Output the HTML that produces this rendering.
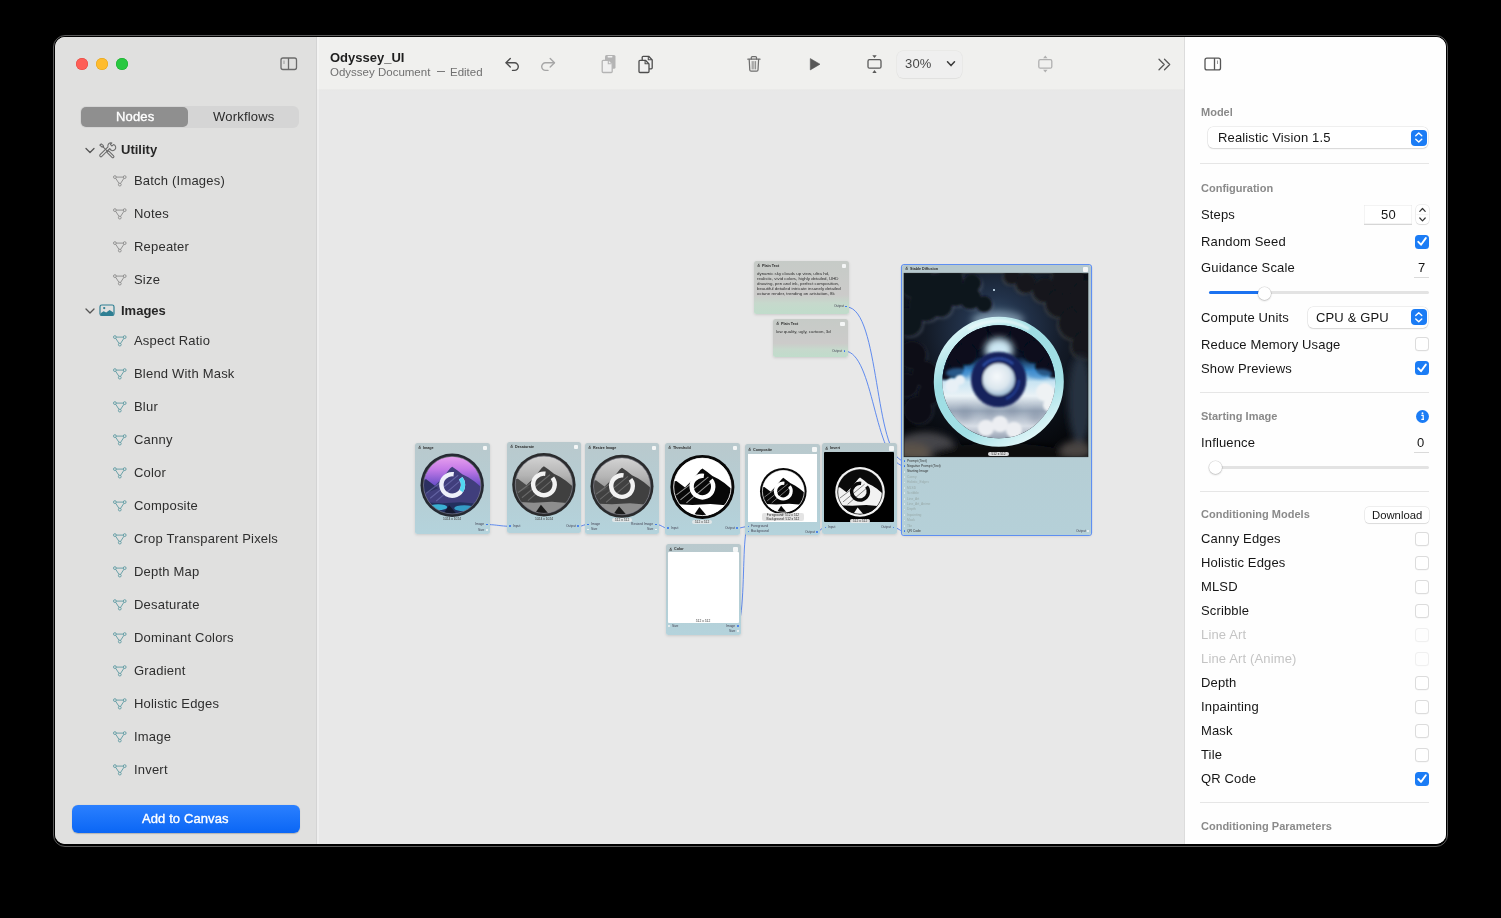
<!DOCTYPE html><html><head><meta charset="utf-8"><style>
html,body{margin:0;padding:0;background:#000;width:1501px;height:918px;overflow:hidden;font-family:'Liberation Sans',sans-serif;}
.t{position:absolute;white-space:nowrap;will-change:transform;}
.a{position:absolute;}
svg{position:absolute;overflow:visible;}
</style></head><body>
<div class="a" style="left:53px;top:35px;width:1393px;height:810px;border:1px solid #5a5a5a;border-radius:12px;background:#000;"></div>
<div class="a" style="left:55px;top:37px;width:1391px;height:807px;border-radius:10px;overflow:hidden;background:#e8e8e8;">
<div class="a" style="left:-55px;top:-37px;width:1501px;height:918px;">
<div class="a" style="left:55px;top:37px;width:262px;height:807px;background:#e0e0df;"></div>
<div class="a" style="left:316px;top:37px;width:1px;height:807px;background:#d4d4d4;"></div>
<div class="a" style="left:317px;top:37px;width:868px;height:53px;background:#f0f0ee;"></div>
<div class="a" style="left:317px;top:89px;width:868px;height:2px;background:linear-gradient(#ececea,#e6e6e6);"></div>
<div class="a" style="left:317px;top:37px;width:2px;height:807px;background:rgba(255,255,255,0.3);"></div>
<div class="a" style="left:1185px;top:37px;width:261px;height:807px;background:#fefefe;"></div>
<div class="a" style="left:1184px;top:37px;width:1px;height:807px;background:#dcdcdc;"></div>
<div class="a" style="left:76px;top:58px;width:12px;height:12px;border-radius:50%;background:#fe5f57;box-shadow:inset 0 0 0 0.5px #e2463f;"></div>
<div class="a" style="left:96px;top:58px;width:12px;height:12px;border-radius:50%;background:#febc2e;box-shadow:inset 0 0 0 0.5px #e1a116;"></div>
<div class="a" style="left:116px;top:58px;width:12px;height:12px;border-radius:50%;background:#28c840;box-shadow:inset 0 0 0 0.5px #17a92c;"></div>
<svg style="left:0;top:0" width="1" height="1"><rect x="281" y="58" width="15.5" height="11.5" rx="2" fill="none" stroke="#6b6b6b" stroke-width="1.3"/><line x1="288.5" y1="58" x2="288.5" y2="69.5" stroke="#6b6b6b" stroke-width="1.3"/><line x1="284" y1="60.5" x2="284" y2="64" stroke="#9a9a9a" stroke-width="1"/></svg>
<div class="a" style="left:80px;top:106px;width:219px;height:22px;background:#d5d5d5;border-radius:6px;"></div>
<div class="a" style="left:81px;top:107px;width:107px;height:20px;background:#8f8f8f;border-radius:5px;"></div>
<div class="t" style="left:115.5px;top:109.00px;font-size:13px;line-height:16px;color:#ffffff;font-weight:normal;letter-spacing:0.2px;-webkit-text-stroke:0.35px #fff;letter-spacing:0.15px;">Nodes</div>
<div class="t" style="left:213px;top:109.00px;font-size:13px;line-height:16px;color:#2a2a2a;font-weight:normal;letter-spacing:0.2px;">Workflows</div>
<svg style="left:0;top:0" width="1" height="1"><path d="M86 148.5 L90 152.5 L94 148.5" fill="none" stroke="#555" stroke-width="1.3" stroke-linecap="round" stroke-linejoin="round"/></svg>
<svg style="left:0;top:0" width="1" height="1"><g fill="none" stroke="#6a6a6a" stroke-width="1.05" stroke-linejoin="round" stroke-linecap="round"><path d="M99.8 145.2 L101.2 143.8 L103.2 145.4 L103.6 147 L102 147 Z"/><path d="M102.8 146.6 L107.6 151.4"/><path d="M106.8 152.2 L108.4 150.6 L113.6 155.8 a1.13 1.13 0 0 1 -1.6 1.6 Z"/><path d="M113.6 144.6 a3.1 3.1 0 1 1 -3.9 3.9 L101.8 156.4 a1.2 1.2 0 0 1 -1.7 -1.7 L108 146.8 a3.1 3.1 0 0 1 3.9 -3.9 L110.4 144.4 L111.8 146 Z"/></g></svg>
<div class="t" style="left:120.8px;top:142.00px;font-size:13px;line-height:16px;color:#262626;font-weight:bold;">Utility</div>
<svg style="left:0;top:0" width="1" height="1"><g fill="none" stroke="#858585" stroke-width="0.85"><circle cx="114.9" cy="177.1" r="1.4"/><circle cx="124.7" cy="177.1" r="1.4"/><circle cx="119.8" cy="184.6" r="1.4"/><line x1="116.30" y1="177.10" x2="123.30" y2="177.10"/><line x1="115.67" y1="178.27" x2="119.03" y2="183.43"/><line x1="123.93" y1="178.27" x2="120.57" y2="183.43"/></g></svg>
<div class="t" style="left:133.8px;top:173.00px;font-size:13px;line-height:16px;color:#2e2e2e;font-weight:normal;letter-spacing:0.2px;">Batch (Images)</div>
<svg style="left:0;top:0" width="1" height="1"><g fill="none" stroke="#858585" stroke-width="0.85"><circle cx="114.9" cy="210.1" r="1.4"/><circle cx="124.7" cy="210.1" r="1.4"/><circle cx="119.8" cy="217.6" r="1.4"/><line x1="116.30" y1="210.10" x2="123.30" y2="210.10"/><line x1="115.67" y1="211.27" x2="119.03" y2="216.43"/><line x1="123.93" y1="211.27" x2="120.57" y2="216.43"/></g></svg>
<div class="t" style="left:133.8px;top:206.00px;font-size:13px;line-height:16px;color:#2e2e2e;font-weight:normal;letter-spacing:0.2px;">Notes</div>
<svg style="left:0;top:0" width="1" height="1"><g fill="none" stroke="#858585" stroke-width="0.85"><circle cx="114.9" cy="243.1" r="1.4"/><circle cx="124.7" cy="243.1" r="1.4"/><circle cx="119.8" cy="250.6" r="1.4"/><line x1="116.30" y1="243.10" x2="123.30" y2="243.10"/><line x1="115.67" y1="244.27" x2="119.03" y2="249.43"/><line x1="123.93" y1="244.27" x2="120.57" y2="249.43"/></g></svg>
<div class="t" style="left:133.8px;top:239.00px;font-size:13px;line-height:16px;color:#2e2e2e;font-weight:normal;letter-spacing:0.2px;">Repeater</div>
<svg style="left:0;top:0" width="1" height="1"><g fill="none" stroke="#858585" stroke-width="0.85"><circle cx="114.9" cy="276.1" r="1.4"/><circle cx="124.7" cy="276.1" r="1.4"/><circle cx="119.8" cy="283.6" r="1.4"/><line x1="116.30" y1="276.10" x2="123.30" y2="276.10"/><line x1="115.67" y1="277.27" x2="119.03" y2="282.43"/><line x1="123.93" y1="277.27" x2="120.57" y2="282.43"/></g></svg>
<div class="t" style="left:133.8px;top:272.00px;font-size:13px;line-height:16px;color:#2e2e2e;font-weight:normal;letter-spacing:0.2px;">Size</div>
<svg style="left:0;top:0" width="1" height="1"><path d="M86 309 L90 313 L94 309" fill="none" stroke="#555" stroke-width="1.3" stroke-linecap="round" stroke-linejoin="round"/></svg>
<svg style="left:0;top:0" width="1" height="1"><rect x="100" y="305" width="14" height="10.5" rx="1.8" fill="none" stroke="#2f7f93" stroke-width="1.2"/><path d="M100.6 315.4 V313.2 L103.6 311.2 L106.2 312.6 L109.6 310 L113.4 312.6 V315.4 Z" fill="#2f7f93"/><circle cx="104.2" cy="308.1" r="1.15" fill="#2f7f93"/></svg>
<div class="t" style="left:120.8px;top:303.00px;font-size:13px;line-height:16px;color:#262626;font-weight:bold;">Images</div>
<svg style="left:0;top:0" width="1" height="1"><g fill="none" stroke="#55969e" stroke-width="0.85"><circle cx="114.9" cy="337.1" r="1.4"/><circle cx="124.7" cy="337.1" r="1.4"/><circle cx="119.8" cy="344.6" r="1.4"/><line x1="116.30" y1="337.10" x2="123.30" y2="337.10"/><line x1="115.67" y1="338.27" x2="119.03" y2="343.43"/><line x1="123.93" y1="338.27" x2="120.57" y2="343.43"/></g></svg>
<div class="t" style="left:133.8px;top:333.00px;font-size:13px;line-height:16px;color:#2e2e2e;font-weight:normal;letter-spacing:0.2px;">Aspect Ratio</div>
<svg style="left:0;top:0" width="1" height="1"><g fill="none" stroke="#55969e" stroke-width="0.85"><circle cx="114.9" cy="370.1" r="1.4"/><circle cx="124.7" cy="370.1" r="1.4"/><circle cx="119.8" cy="377.6" r="1.4"/><line x1="116.30" y1="370.10" x2="123.30" y2="370.10"/><line x1="115.67" y1="371.27" x2="119.03" y2="376.43"/><line x1="123.93" y1="371.27" x2="120.57" y2="376.43"/></g></svg>
<div class="t" style="left:133.8px;top:366.00px;font-size:13px;line-height:16px;color:#2e2e2e;font-weight:normal;letter-spacing:0.2px;">Blend With Mask</div>
<svg style="left:0;top:0" width="1" height="1"><g fill="none" stroke="#55969e" stroke-width="0.85"><circle cx="114.9" cy="403.1" r="1.4"/><circle cx="124.7" cy="403.1" r="1.4"/><circle cx="119.8" cy="410.6" r="1.4"/><line x1="116.30" y1="403.10" x2="123.30" y2="403.10"/><line x1="115.67" y1="404.27" x2="119.03" y2="409.43"/><line x1="123.93" y1="404.27" x2="120.57" y2="409.43"/></g></svg>
<div class="t" style="left:133.8px;top:399.00px;font-size:13px;line-height:16px;color:#2e2e2e;font-weight:normal;letter-spacing:0.2px;">Blur</div>
<svg style="left:0;top:0" width="1" height="1"><g fill="none" stroke="#55969e" stroke-width="0.85"><circle cx="114.9" cy="436.1" r="1.4"/><circle cx="124.7" cy="436.1" r="1.4"/><circle cx="119.8" cy="443.6" r="1.4"/><line x1="116.30" y1="436.10" x2="123.30" y2="436.10"/><line x1="115.67" y1="437.27" x2="119.03" y2="442.43"/><line x1="123.93" y1="437.27" x2="120.57" y2="442.43"/></g></svg>
<div class="t" style="left:133.8px;top:432.00px;font-size:13px;line-height:16px;color:#2e2e2e;font-weight:normal;letter-spacing:0.2px;">Canny</div>
<svg style="left:0;top:0" width="1" height="1"><g fill="none" stroke="#55969e" stroke-width="0.85"><circle cx="114.9" cy="469.1" r="1.4"/><circle cx="124.7" cy="469.1" r="1.4"/><circle cx="119.8" cy="476.6" r="1.4"/><line x1="116.30" y1="469.10" x2="123.30" y2="469.10"/><line x1="115.67" y1="470.27" x2="119.03" y2="475.43"/><line x1="123.93" y1="470.27" x2="120.57" y2="475.43"/></g></svg>
<div class="t" style="left:133.8px;top:465.00px;font-size:13px;line-height:16px;color:#2e2e2e;font-weight:normal;letter-spacing:0.2px;">Color</div>
<svg style="left:0;top:0" width="1" height="1"><g fill="none" stroke="#55969e" stroke-width="0.85"><circle cx="114.9" cy="502.1" r="1.4"/><circle cx="124.7" cy="502.1" r="1.4"/><circle cx="119.8" cy="509.6" r="1.4"/><line x1="116.30" y1="502.10" x2="123.30" y2="502.10"/><line x1="115.67" y1="503.27" x2="119.03" y2="508.43"/><line x1="123.93" y1="503.27" x2="120.57" y2="508.43"/></g></svg>
<div class="t" style="left:133.8px;top:498.00px;font-size:13px;line-height:16px;color:#2e2e2e;font-weight:normal;letter-spacing:0.2px;">Composite</div>
<svg style="left:0;top:0" width="1" height="1"><g fill="none" stroke="#55969e" stroke-width="0.85"><circle cx="114.9" cy="535.1" r="1.4"/><circle cx="124.7" cy="535.1" r="1.4"/><circle cx="119.8" cy="542.6" r="1.4"/><line x1="116.30" y1="535.10" x2="123.30" y2="535.10"/><line x1="115.67" y1="536.27" x2="119.03" y2="541.43"/><line x1="123.93" y1="536.27" x2="120.57" y2="541.43"/></g></svg>
<div class="t" style="left:133.8px;top:531.00px;font-size:13px;line-height:16px;color:#2e2e2e;font-weight:normal;letter-spacing:0.2px;">Crop Transparent Pixels</div>
<svg style="left:0;top:0" width="1" height="1"><g fill="none" stroke="#55969e" stroke-width="0.85"><circle cx="114.9" cy="568.1" r="1.4"/><circle cx="124.7" cy="568.1" r="1.4"/><circle cx="119.8" cy="575.6" r="1.4"/><line x1="116.30" y1="568.10" x2="123.30" y2="568.10"/><line x1="115.67" y1="569.27" x2="119.03" y2="574.43"/><line x1="123.93" y1="569.27" x2="120.57" y2="574.43"/></g></svg>
<div class="t" style="left:133.8px;top:564.00px;font-size:13px;line-height:16px;color:#2e2e2e;font-weight:normal;letter-spacing:0.2px;">Depth Map</div>
<svg style="left:0;top:0" width="1" height="1"><g fill="none" stroke="#55969e" stroke-width="0.85"><circle cx="114.9" cy="601.1" r="1.4"/><circle cx="124.7" cy="601.1" r="1.4"/><circle cx="119.8" cy="608.6" r="1.4"/><line x1="116.30" y1="601.10" x2="123.30" y2="601.10"/><line x1="115.67" y1="602.27" x2="119.03" y2="607.43"/><line x1="123.93" y1="602.27" x2="120.57" y2="607.43"/></g></svg>
<div class="t" style="left:133.8px;top:597.00px;font-size:13px;line-height:16px;color:#2e2e2e;font-weight:normal;letter-spacing:0.2px;">Desaturate</div>
<svg style="left:0;top:0" width="1" height="1"><g fill="none" stroke="#55969e" stroke-width="0.85"><circle cx="114.9" cy="634.1" r="1.4"/><circle cx="124.7" cy="634.1" r="1.4"/><circle cx="119.8" cy="641.6" r="1.4"/><line x1="116.30" y1="634.10" x2="123.30" y2="634.10"/><line x1="115.67" y1="635.27" x2="119.03" y2="640.43"/><line x1="123.93" y1="635.27" x2="120.57" y2="640.43"/></g></svg>
<div class="t" style="left:133.8px;top:630.00px;font-size:13px;line-height:16px;color:#2e2e2e;font-weight:normal;letter-spacing:0.2px;">Dominant Colors</div>
<svg style="left:0;top:0" width="1" height="1"><g fill="none" stroke="#55969e" stroke-width="0.85"><circle cx="114.9" cy="667.1" r="1.4"/><circle cx="124.7" cy="667.1" r="1.4"/><circle cx="119.8" cy="674.6" r="1.4"/><line x1="116.30" y1="667.10" x2="123.30" y2="667.10"/><line x1="115.67" y1="668.27" x2="119.03" y2="673.43"/><line x1="123.93" y1="668.27" x2="120.57" y2="673.43"/></g></svg>
<div class="t" style="left:133.8px;top:663.00px;font-size:13px;line-height:16px;color:#2e2e2e;font-weight:normal;letter-spacing:0.2px;">Gradient</div>
<svg style="left:0;top:0" width="1" height="1"><g fill="none" stroke="#55969e" stroke-width="0.85"><circle cx="114.9" cy="700.1" r="1.4"/><circle cx="124.7" cy="700.1" r="1.4"/><circle cx="119.8" cy="707.6" r="1.4"/><line x1="116.30" y1="700.10" x2="123.30" y2="700.10"/><line x1="115.67" y1="701.27" x2="119.03" y2="706.43"/><line x1="123.93" y1="701.27" x2="120.57" y2="706.43"/></g></svg>
<div class="t" style="left:133.8px;top:696.00px;font-size:13px;line-height:16px;color:#2e2e2e;font-weight:normal;letter-spacing:0.2px;">Holistic Edges</div>
<svg style="left:0;top:0" width="1" height="1"><g fill="none" stroke="#55969e" stroke-width="0.85"><circle cx="114.9" cy="733.1" r="1.4"/><circle cx="124.7" cy="733.1" r="1.4"/><circle cx="119.8" cy="740.6" r="1.4"/><line x1="116.30" y1="733.10" x2="123.30" y2="733.10"/><line x1="115.67" y1="734.27" x2="119.03" y2="739.43"/><line x1="123.93" y1="734.27" x2="120.57" y2="739.43"/></g></svg>
<div class="t" style="left:133.8px;top:729.00px;font-size:13px;line-height:16px;color:#2e2e2e;font-weight:normal;letter-spacing:0.2px;">Image</div>
<svg style="left:0;top:0" width="1" height="1"><g fill="none" stroke="#55969e" stroke-width="0.85"><circle cx="114.9" cy="766.1" r="1.4"/><circle cx="124.7" cy="766.1" r="1.4"/><circle cx="119.8" cy="773.6" r="1.4"/><line x1="116.30" y1="766.10" x2="123.30" y2="766.10"/><line x1="115.67" y1="767.27" x2="119.03" y2="772.43"/><line x1="123.93" y1="767.27" x2="120.57" y2="772.43"/></g></svg>
<div class="t" style="left:133.8px;top:762.00px;font-size:13px;line-height:16px;color:#2e2e2e;font-weight:normal;letter-spacing:0.2px;">Invert</div>
<div class="a" style="left:72px;top:805px;width:228px;height:28px;background:linear-gradient(#2b80ff,#0a66f5);border-radius:6px;box-shadow:0 0.5px 1px rgba(0,0,0,0.2);"></div>
<div class="t" style="left:142px;top:811.00px;font-size:13px;line-height:16px;color:#ffffff;font-weight:normal;letter-spacing:0.2px;-webkit-text-stroke:0.35px #fff;letter-spacing:0.1px;">Add to Canvas</div>
<div class="t" style="left:329.5px;top:49.50px;font-size:13px;line-height:16px;color:#1e1e1e;font-weight:bold;">Odyssey_UI</div>
<div class="t" style="left:329.5px;top:65.00px;font-size:11px;line-height:14px;color:#707070;font-weight:normal;font-size:11.5px;">Odyssey Document</div>
<div class="a" style="left:437px;top:71.2px;width:7.6px;height:1px;background:#7a7a7a;"></div>
<div class="t" style="left:449.5px;top:65.00px;font-size:11px;line-height:14px;color:#707070;font-weight:normal;font-size:11.5px;">Edited</div>
<svg style="left:0;top:0" width="1" height="1"><g fill="none" stroke="#4d4d4d" stroke-width="1.4" stroke-linecap="round" stroke-linejoin="round"><path d="M510.3 58.5 L506 62.8 L510.3 67.1"/><path d="M506.3 62.8 H514.5 A3.8 3.8 0 0 1 514.5 70.4 H512.5"/></g><g fill="none" stroke="#a6a6a6" stroke-width="1.4" stroke-linecap="round" stroke-linejoin="round"><path d="M550.2 58.5 L554.5 62.8 L550.2 67.1"/><path d="M554.2 62.8 H545.5 A3.8 3.8 0 0 0 545.5 70.4 H548"/></g></svg>
<svg style="left:0;top:0" width="1" height="1"><path d="M605 56.5 a1.5 1.5 0 0 1 1.5 -1.5 h7.5 a1.5 1.5 0 0 1 1.5 1.5 v10.8 a1.5 1.5 0 0 1 -1.5 1.5 h-9 z" fill="#b4b4b4"/><rect x="607.5" y="56" width="5" height="1.5" rx="0.7" fill="#f0f0f0"/><path d="M603.2 60.3 h6 l3 3 v8.2 a1 1 0 0 1 -1 1 h-8 a1 1 0 0 1 -1 -1 v-10.2 a1 1 0 0 1 1 -1 z" fill="#f0f0f0" stroke="#b4b4b4" stroke-width="1.3"/><path d="M608.3 60.5 v3.2 h3.2" fill="none" stroke="#b4b4b4" stroke-width="1.1"/></svg>
<svg style="left:0;top:0" width="1" height="1"><g fill="#f0f0f0" stroke="#4d4d4d" stroke-width="1.3" stroke-linejoin="round"><path d="M643.2 56.3 h5.5 l3.5 3.7 v7.8 a1 1 0 0 1 -1 1 h-8 a1 1 0 0 1 -1 -1 v-10.5 a1 1 0 0 1 1 -1 z"/><path d="M648.3 56.5 v3.3 h3.5" fill="none" stroke-width="1.1"/><path d="M640 60.3 h5.5 l3.5 3.7 v7.5 a1 1 0 0 1 -1 1 h-8 a1 1 0 0 1 -1 -1 v-10.2 a1 1 0 0 1 1 -1 z"/><path d="M645.1 60.5 v3.3 h3.5" fill="none" stroke-width="1.1"/></g></svg>
<svg style="left:0;top:0" width="1" height="1"><g fill="none" stroke="#6e6e6e" stroke-width="1.25" stroke-linecap="round" stroke-linejoin="round"><path d="M747.8 59.2 H760"/><path d="M751.3 59 V57.5 a1 1 0 0 1 1 -1 h3.2 a1 1 0 0 1 1 1 V59"/><path d="M749.2 59.5 L749.8 70 a1.3 1.3 0 0 0 1.3 1.2 h5.6 a1.3 1.3 0 0 0 1.3 -1.2 L758.6 59.5"/><path d="M752.2 61.5 V69 M753.9 61.5 V69 M755.6 61.5 V69" stroke-width="0.8"/></g></svg>
<svg style="left:0;top:0" width="1" height="1"><path d="M810.3 58.6 L820 64.2 L810.3 69.9 Z" fill="#585858" stroke="#585858" stroke-width="0.6" stroke-linejoin="round"/></svg>
<svg style="left:0;top:0" width="1" height="1"><rect x="868.0" y="59.7" width="13" height="8.5" rx="1.5" fill="none" stroke="#5a5a5a" stroke-width="1.3"/><path d="M872.3 55.2 H876.7 L874.5 58 Z M872.3 73 H876.7 L874.5 70.1 Z" fill="#5a5a5a"/></svg>
<svg style="left:0;top:0" width="1" height="1"><rect x="1038.8" y="59.7" width="13" height="8.5" rx="1.5" fill="none" stroke="#b0b0b0" stroke-width="1.3"/><path d="M1043.1 58.2 H1047.5 L1045.3 55.4 Z M1043.1 69.7 H1047.5 L1045.3 72.6 Z" fill="#b0b0b0"/></svg>
<div class="a" style="left:897px;top:50.5px;width:65px;height:27px;border-radius:6px;background:#efefef;box-shadow:0 0 0 0.5px rgba(0,0,0,0.06), 0 1px 1px rgba(0,0,0,0.04);"></div>
<div class="t" style="left:904.5px;top:56.00px;font-size:13px;line-height:16px;color:#484848;font-weight:normal;letter-spacing:0.2px;">30%</div>
<svg style="left:0;top:0" width="1" height="1"><path d="M947.5 61.8 L951 65.6 L954.5 61.8" fill="none" stroke="#3a3a3a" stroke-width="1.5" stroke-linecap="round" stroke-linejoin="round"/></svg>
<svg style="left:0;top:0" width="1" height="1"><path d="M1159 59.2 L1164.2 64.5 L1159 69.8 M1164.5 59.2 L1169.7 64.5 L1164.5 69.8" fill="none" stroke="#555" stroke-width="1.25" stroke-linecap="round" stroke-linejoin="round"/></svg>
<svg style="left:0;top:0" width="1" height="1"><rect x="1205" y="58.2" width="15.5" height="11.7" rx="2" fill="none" stroke="#555" stroke-width="1.3"/><line x1="1214.5" y1="58.2" x2="1214.5" y2="69.9" stroke="#555" stroke-width="1.3"/><line x1="1217.5" y1="60.5" x2="1217.5" y2="64" stroke="#999" stroke-width="1"/></svg>
<div class="t" style="left:1200.8px;top:105.00px;font-size:11px;line-height:14px;color:#8a8a8a;font-weight:bold;">Model</div>
<div class="a" style="left:1208px;top:127px;width:219.5px;height:21px;border-radius:5px;background:#fff;box-shadow:0 0 0 0.5px rgba(0,0,0,0.12), 0 1px 1.5px rgba(0,0,0,0.10);"></div>
<div class="t" style="left:1217.5px;top:129.50px;font-size:13px;line-height:16px;color:#161616;font-weight:normal;letter-spacing:0.15px;">Realistic Vision 1.5</div>
<div class="a" style="left:1411.0px;top:129.5px;width:15.5px;height:16px;border-radius:4px;background:#1b7cf5;"></div>
<svg style="left:0;top:0" width="1" height="1"><path d="M1415.75 135.8 L1418.75 133.0 L1421.75 135.8 M1415.75 139.2 L1418.75 142.0 L1421.75 139.2" fill="none" stroke="#fff" stroke-width="1.4" stroke-linecap="round" stroke-linejoin="round"/></svg>
<div class="a" style="left:1200px;top:163px;width:229px;height:1px;background:#e6e6e6;"></div>
<div class="t" style="left:1200.8px;top:181.00px;font-size:11px;line-height:14px;color:#8a8a8a;font-weight:bold;">Configuration</div>
<div class="t" style="left:1200.8px;top:207.20px;font-size:13px;line-height:16px;color:#161616;font-weight:normal;letter-spacing:0.15px;">Steps</div>
<div class="a" style="left:1363.5px;top:204.7px;width:48.5px;height:20px;background:#fff;box-shadow:inset 0 0 0 0.5px #e8e8e8;border-bottom:1px solid #d6d6d6;box-sizing:border-box;"></div>
<div class="t" style="left:1380.6px;top:206.50px;font-size:13px;line-height:16px;color:#161616;font-weight:normal;letter-spacing:0.15px;">50</div>
<div class="a" style="left:1416px;top:204.7px;width:13px;height:19.5px;border-radius:4px;background:#fff;box-shadow:0 0 0 0.5px rgba(0,0,0,0.12), 0 1px 1px rgba(0,0,0,0.08);"></div>
<svg style="left:0;top:0" width="1" height="1"><path d="M1419.8 211.3 L1422.5 208.5 L1425.2 211.3 M1419.8 218 L1422.5 220.8 L1425.2 218" fill="none" stroke="#333" stroke-width="1.2" stroke-linecap="round" stroke-linejoin="round"/><line x1="1416.5" y1="214.6" x2="1428.5" y2="214.6" stroke="#eee" stroke-width="0.6"/></svg>
<div class="t" style="left:1200.8px;top:233.70px;font-size:13px;line-height:16px;color:#161616;font-weight:normal;letter-spacing:0.15px;">Random Seed</div>
<div class="a" style="left:1415px;top:234.5px;width:14px;height:14px;border-radius:3.5px;background:#1b7cf5;"></div>
<svg style="left:0;top:0" width="1" height="1"><path d="M1418.3 241.8 L1421 244.7 L1425.8 238.1" fill="none" stroke="#fff" stroke-width="1.9" stroke-linecap="round" stroke-linejoin="round"/></svg>
<div class="t" style="left:1200.8px;top:260.30px;font-size:13px;line-height:16px;color:#161616;font-weight:normal;letter-spacing:0.15px;">Guidance Scale</div>
<div class="t" style="left:1417.8px;top:259.70px;font-size:13px;line-height:16px;color:#161616;font-weight:normal;letter-spacing:0.15px;">7</div>
<div class="a" style="left:1413.5px;top:277px;width:15px;height:1px;background:#dadada;"></div>
<div class="a" style="left:1209px;top:291.3px;width:220px;height:3px;background:#e3e3e3;border-radius:2px;"></div>
<div class="a" style="left:1209px;top:291.3px;width:55px;height:3px;background:#1b72f0;border-radius:2px;"></div>
<div class="a" style="left:1257.5px;top:286.5px;width:13px;height:13px;border-radius:50%;background:#fff;box-shadow:0 0 0 0.5px rgba(0,0,0,0.14), 0 1px 2px rgba(0,0,0,0.18);"></div>
<div class="t" style="left:1200.8px;top:309.70px;font-size:13px;line-height:16px;color:#161616;font-weight:normal;letter-spacing:0.15px;">Compute Units</div>
<div class="a" style="left:1307.5px;top:307px;width:120px;height:20.5px;border-radius:5px;background:#fff;box-shadow:0 0 0 0.5px rgba(0,0,0,0.12), 0 1px 1.5px rgba(0,0,0,0.10);"></div>
<div class="t" style="left:1315.8px;top:309.50px;font-size:13px;line-height:16px;color:#161616;font-weight:normal;letter-spacing:0.15px;">CPU &amp; GPU</div>
<div class="a" style="left:1411.0px;top:309.25px;width:15.5px;height:16px;border-radius:4px;background:#1b7cf5;"></div>
<svg style="left:0;top:0" width="1" height="1"><path d="M1415.75 315.55 L1418.75 312.75 L1421.75 315.55 M1415.75 318.95 L1418.75 321.75 L1421.75 318.95" fill="none" stroke="#fff" stroke-width="1.4" stroke-linecap="round" stroke-linejoin="round"/></svg>
<div class="t" style="left:1200.8px;top:336.70px;font-size:13px;line-height:16px;color:#161616;font-weight:normal;letter-spacing:0.15px;">Reduce Memory Usage</div>
<div class="a" style="left:1415px;top:337px;width:14px;height:14px;border-radius:3.5px;background:#fff;box-shadow:inset 0 0 0 1px #dcdcdc, 0 0.5px 0.5px rgba(0,0,0,0.05);opacity:1"></div>
<div class="t" style="left:1200.8px;top:360.50px;font-size:13px;line-height:16px;color:#161616;font-weight:normal;letter-spacing:0.15px;">Show Previews</div>
<div class="a" style="left:1415px;top:361px;width:14px;height:14px;border-radius:3.5px;background:#1b7cf5;"></div>
<svg style="left:0;top:0" width="1" height="1"><path d="M1418.3 368.3 L1421 371.2 L1425.8 364.6" fill="none" stroke="#fff" stroke-width="1.9" stroke-linecap="round" stroke-linejoin="round"/></svg>
<div class="a" style="left:1200px;top:391.5px;width:229px;height:1px;background:#e6e6e6;"></div>
<div class="t" style="left:1200.8px;top:409.30px;font-size:11px;line-height:14px;color:#8a8a8a;font-weight:bold;">Starting Image</div>
<div class="a" style="left:1416px;top:409.7px;width:13px;height:13px;border-radius:50%;background:#1b7cf5;"></div>
<svg style="left:0;top:0" width="1" height="1"><circle cx="1422.5" cy="413.3" r="0.95" fill="#fff"/><path d="M1421.3 415.3 H1423.2 V419.3 M1421.3 419.4 H1424" fill="none" stroke="#fff" stroke-width="1.2"/></svg>
<div class="t" style="left:1200.8px;top:435.00px;font-size:13px;line-height:16px;color:#161616;font-weight:normal;letter-spacing:0.15px;">Influence</div>
<div class="t" style="left:1416.7px;top:435.00px;font-size:13px;line-height:16px;color:#161616;font-weight:normal;letter-spacing:0.15px;">0</div>
<div class="a" style="left:1413.5px;top:452px;width:15px;height:1px;background:#dadada;"></div>
<div class="a" style="left:1209px;top:466px;width:220px;height:3px;background:#e3e3e3;border-radius:2px;"></div>
<div class="a" style="left:1208.5px;top:461px;width:13px;height:13px;border-radius:50%;background:#fff;box-shadow:0 0 0 0.5px rgba(0,0,0,0.14), 0 1px 2px rgba(0,0,0,0.18);"></div>
<div class="a" style="left:1200px;top:490.5px;width:229px;height:1px;background:#e6e6e6;"></div>
<div class="t" style="left:1200.8px;top:507.30px;font-size:11px;line-height:14px;color:#8a8a8a;font-weight:bold;">Conditioning Models</div>
<div class="a" style="left:1365px;top:506.5px;width:64px;height:16px;border-radius:4px;background:#fff;box-shadow:0 0 0 0.5px rgba(0,0,0,0.13), 0 1px 1px rgba(0,0,0,0.08);"></div>
<div class="t" style="left:1371.5px;top:507.50px;font-size:11px;line-height:14px;color:#161616;font-weight:normal;font-size:11.3px;">Download</div>
<div class="t" style="left:1200.8px;top:531.00px;font-size:13px;line-height:16px;color:#161616;font-weight:normal;letter-spacing:0.15px;">Canny Edges</div>
<div class="a" style="left:1415px;top:531.7px;width:14px;height:14px;border-radius:3.5px;background:#fff;box-shadow:inset 0 0 0 1px #dcdcdc, 0 0.5px 0.5px rgba(0,0,0,0.05);opacity:1"></div>
<div class="t" style="left:1200.8px;top:555.00px;font-size:13px;line-height:16px;color:#161616;font-weight:normal;letter-spacing:0.15px;">Holistic Edges</div>
<div class="a" style="left:1415px;top:555.7px;width:14px;height:14px;border-radius:3.5px;background:#fff;box-shadow:inset 0 0 0 1px #dcdcdc, 0 0.5px 0.5px rgba(0,0,0,0.05);opacity:1"></div>
<div class="t" style="left:1200.8px;top:579.00px;font-size:13px;line-height:16px;color:#161616;font-weight:normal;letter-spacing:0.15px;">MLSD</div>
<div class="a" style="left:1415px;top:579.7px;width:14px;height:14px;border-radius:3.5px;background:#fff;box-shadow:inset 0 0 0 1px #dcdcdc, 0 0.5px 0.5px rgba(0,0,0,0.05);opacity:1"></div>
<div class="t" style="left:1200.8px;top:603.00px;font-size:13px;line-height:16px;color:#161616;font-weight:normal;letter-spacing:0.15px;">Scribble</div>
<div class="a" style="left:1415px;top:603.7px;width:14px;height:14px;border-radius:3.5px;background:#fff;box-shadow:inset 0 0 0 1px #dcdcdc, 0 0.5px 0.5px rgba(0,0,0,0.05);opacity:1"></div>
<div class="t" style="left:1200.8px;top:627.00px;font-size:13px;line-height:16px;color:#c4c4c4;font-weight:normal;letter-spacing:0.15px;">Line Art</div>
<div class="a" style="left:1415px;top:627.7px;width:14px;height:14px;border-radius:3.5px;background:#fff;box-shadow:inset 0 0 0 1px #dcdcdc, 0 0.5px 0.5px rgba(0,0,0,0.05);opacity:0.4"></div>
<div class="t" style="left:1200.8px;top:651.00px;font-size:13px;line-height:16px;color:#c4c4c4;font-weight:normal;letter-spacing:0.15px;">Line Art (Anime)</div>
<div class="a" style="left:1415px;top:651.7px;width:14px;height:14px;border-radius:3.5px;background:#fff;box-shadow:inset 0 0 0 1px #dcdcdc, 0 0.5px 0.5px rgba(0,0,0,0.05);opacity:0.4"></div>
<div class="t" style="left:1200.8px;top:675.00px;font-size:13px;line-height:16px;color:#161616;font-weight:normal;letter-spacing:0.15px;">Depth</div>
<div class="a" style="left:1415px;top:675.7px;width:14px;height:14px;border-radius:3.5px;background:#fff;box-shadow:inset 0 0 0 1px #dcdcdc, 0 0.5px 0.5px rgba(0,0,0,0.05);opacity:1"></div>
<div class="t" style="left:1200.8px;top:699.00px;font-size:13px;line-height:16px;color:#161616;font-weight:normal;letter-spacing:0.15px;">Inpainting</div>
<div class="a" style="left:1415px;top:699.7px;width:14px;height:14px;border-radius:3.5px;background:#fff;box-shadow:inset 0 0 0 1px #dcdcdc, 0 0.5px 0.5px rgba(0,0,0,0.05);opacity:1"></div>
<div class="t" style="left:1200.8px;top:723.00px;font-size:13px;line-height:16px;color:#161616;font-weight:normal;letter-spacing:0.15px;">Mask</div>
<div class="a" style="left:1415px;top:723.7px;width:14px;height:14px;border-radius:3.5px;background:#fff;box-shadow:inset 0 0 0 1px #dcdcdc, 0 0.5px 0.5px rgba(0,0,0,0.05);opacity:1"></div>
<div class="t" style="left:1200.8px;top:747.00px;font-size:13px;line-height:16px;color:#161616;font-weight:normal;letter-spacing:0.15px;">Tile</div>
<div class="a" style="left:1415px;top:747.7px;width:14px;height:14px;border-radius:3.5px;background:#fff;box-shadow:inset 0 0 0 1px #dcdcdc, 0 0.5px 0.5px rgba(0,0,0,0.05);opacity:1"></div>
<div class="t" style="left:1200.8px;top:771.00px;font-size:13px;line-height:16px;color:#161616;font-weight:normal;letter-spacing:0.15px;">QR Code</div>
<div class="a" style="left:1415px;top:771.7px;width:14px;height:14px;border-radius:3.5px;background:#1b7cf5;"></div>
<svg style="left:0;top:0" width="1" height="1"><path d="M1418.3 779.0 L1421 781.9000000000001 L1425.8 775.3000000000001" fill="none" stroke="#fff" stroke-width="1.9" stroke-linecap="round" stroke-linejoin="round"/></svg>
<div class="a" style="left:1200px;top:802px;width:229px;height:1px;background:#e6e6e6;"></div>
<div class="t" style="left:1200.8px;top:819.40px;font-size:11px;line-height:14px;color:#8a8a8a;font-weight:bold;">Conditioning Parameters</div>
<svg style="left:0;top:0" width="1" height="1"><g fill="none" stroke="#5080ee" stroke-width="0.9"><path d="M847 307 C880 309, 874 455, 903.5 461"/><path d="M845 351 C874 353, 874 460, 903.5 466"/><path d="M488 524.5 C498 525, 500 526, 509 526.3"/><path d="M579 526.3 C583 526, 584 524.5, 587 524.5"/><path d="M657 524.5 C662 525, 663 528, 667 528"/><path d="M738 528 C742 528, 744 526.5, 748 526.5"/><path d="M738 625 C744 615, 743 560, 745 540 S747 532, 748 531.5"/><path d="M817 532 C821 531, 821 527.5, 825 527.5"/><path d="M894 527.5 C899 528, 899 531, 903.5 531"/></g></svg>
<div class="a" style="left:415px;top:443px;width:75px;height:91px;background:linear-gradient(180deg,#b9c9cd 0%,#b5ced5 60%,#b4d3dc 100%);border-radius:2.5px;box-shadow:0 1px 3px rgba(0,0,0,0.13);"></div>
<div class="t" style="left:418px;top:445.2px;font-size:4.2px;line-height:5px;color:#3a3a3a;font-weight:bold;">≚</div>
<div class="t" style="left:422.6px;top:446.12px;font-size:3.7px;line-height:5px;color:#2a2a2a;font-weight:bold;">Image</div>
<div class="a" style="left:482.5px;top:445.8px;width:4.6px;height:4.6px;background:#f4f6f6;border-radius:1px;"></div>
<svg style="left:0;top:0" width="1" height="1"><defs><linearGradient id="g452" x1="0" y1="0" x2="0" y2="1"><stop offset="0" stop-color="#f0a8f0"/><stop offset="0.25" stop-color="#c47ae8"/><stop offset="0.5" stop-color="#6a4fc8"/><stop offset="1" stop-color="#2a3070"/></linearGradient><clipPath id="cg452"><circle cx="452.2" cy="485.2" r="28.5"/></clipPath></defs><circle cx="452.2" cy="485.2" r="31.7" fill="#262a33"/><g clip-path="url(#cg452)"><rect x="420.5" y="453.5" width="63.4" height="63.4" fill="url(#g452)"/><path d="M420.50 494.20 L432.20 488.20 L440.20 480.20 L446.20 473.20 L450.20 468.20 L452.20 466.70 L457.20 470.20 L462.20 474.20 L468.20 477.20 L474.20 481.20 L480.20 486.20 L483.90 488.20 L483.90 504.20 L420.50 504.20 Z" fill="#403e7c"/><path d="M420.50 480.20 L426.20 479.20 L438.20 488.20 L420.50 495.20 Z" fill="#2c3060"/><path d="M430.20 498.20 L458.20 475.20 M436.20 501.20 L462.20 479.20 M426.20 493.20 L450.20 475.20" stroke="#a0a4e8" stroke-width="1.1" opacity="0.35"/><path d="M420.50 502.20 L442.20 503.20 L460.20 502.20 L483.90 504.20 L483.90 516.90 L420.50 516.90 Z" fill="#23305e"/><ellipse cx="438.2" cy="507.2" rx="9" ry="3" fill="#40c8e8" opacity="0.85"/><ellipse cx="464.2" cy="508.2" rx="10" ry="3" fill="#38b8e0" opacity="0.8"/><path d="M441.20 516.90 L449.20 505.20 L459.20 516.90 Z" fill="#161a30"/></g><circle cx="452.2" cy="485.2" r="28.7" fill="none" stroke="#9a9aa8" stroke-width="0.7" opacity="0.7"/><path d="M460.71 478.25 A10.8 10.8 0 1 1 453.70 474.21" fill="none" stroke="#eef0fa" stroke-width="4.4"/><path d="M460.71 478.25 A10.8 10.8 0 0 1 461.05 491.09" fill="none" stroke="#52d6f2" stroke-width="4.4"/></svg>
<div class="t" style="left:442.2px;top:516.5px;width:20px;text-align:center;font-size:3.3px;line-height:4px;color:#333;background:transparent;border-radius:2px;">1024 x 1024</div>
<div class="a" style="left:486.1px;top:523.6px;width:1.8px;height:1.8px;border-radius:50%;background:#2f6ef0;"></div>
<div class="t" style="right:1016.6px;top:522.30px;font-size:3.3px;line-height:4.4px;color:#445;">Image</div>
<div class="a" style="left:486.1px;top:529.1px;width:1.8px;height:1.8px;border-radius:50%;background:#f5f5f5;"></div>
<div class="t" style="right:1016.6px;top:527.80px;font-size:3.3px;line-height:4.4px;color:#445;">Size</div>
<div class="a" style="left:507px;top:442px;width:74px;height:91px;background:linear-gradient(180deg,#b9c9cd 0%,#b5ced5 60%,#b4d3dc 100%);border-radius:2.5px;box-shadow:0 1px 3px rgba(0,0,0,0.13);"></div>
<div class="t" style="left:510px;top:444.2px;font-size:4.2px;line-height:5px;color:#3a3a3a;font-weight:bold;">≚</div>
<div class="t" style="left:514.6px;top:445.12px;font-size:3.7px;line-height:5px;color:#2a2a2a;font-weight:bold;">Desaturate</div>
<div class="a" style="left:573.5px;top:444.8px;width:4.6px;height:4.6px;background:#f4f6f6;border-radius:1px;"></div>
<svg style="left:0;top:0" width="1" height="1"><defs><linearGradient id="g543" x1="0" y1="0" x2="0" y2="1"><stop offset="0" stop-color="#d8d8d8"/><stop offset="0.35" stop-color="#b4b4b4"/><stop offset="0.6" stop-color="#8a8a8a"/><stop offset="1" stop-color="#707070"/></linearGradient><clipPath id="cg543"><circle cx="543.9" cy="484.7" r="28.5"/></clipPath></defs><circle cx="543.9" cy="484.7" r="31.7" fill="#2a2b2d"/><g clip-path="url(#cg543)"><rect x="512.1999999999999" y="453.0" width="63.4" height="63.4" fill="url(#g543)"/><path d="M512.20 493.70 L523.90 487.70 L531.90 479.70 L537.90 472.70 L541.90 467.70 L543.90 466.20 L548.90 469.70 L553.90 473.70 L559.90 476.70 L565.90 480.70 L571.90 485.70 L575.60 487.70 L575.60 503.70 L512.20 503.70 Z" fill="#404040"/><path d="M512.20 479.70 L517.90 478.70 L529.90 487.70 L512.20 494.70 Z" fill="#4a4a4a"/><path d="M521.90 497.70 L549.90 474.70 M527.90 500.70 L553.90 478.70 M517.90 492.70 L541.90 474.70" stroke="#b0b0b0" stroke-width="1.1" opacity="0.35"/><path d="M512.20 501.70 L533.90 502.70 L551.90 501.70 L575.60 503.70 L575.60 516.40 L512.20 516.40 Z" fill="#8e8e8e"/><path d="M532.90 516.40 L540.90 504.70 L550.90 516.40 Z" fill="#1c1c1c"/></g><circle cx="543.9" cy="484.7" r="28.7" fill="none" stroke="#9a9aa8" stroke-width="0.7" opacity="0.7"/><path d="M552.41 477.75 A10.8 10.8 0 1 1 545.40 473.71" fill="none" stroke="#f2f2f2" stroke-width="4.4"/></svg>
<div class="t" style="left:533.9px;top:516.5px;width:20px;text-align:center;font-size:3.3px;line-height:4px;color:#333;background:transparent;border-radius:2px;">1024 x 1024</div>
<div class="a" style="left:509.1px;top:525.4px;width:1.8px;height:1.8px;border-radius:50%;background:#2f6ef0;"></div>
<div class="t" style="left:512.6px;top:524.10px;font-size:3.3px;line-height:4.4px;color:#445;">Input</div>
<div class="a" style="left:577.1px;top:525.4px;width:1.8px;height:1.8px;border-radius:50%;background:#2f6ef0;"></div>
<div class="t" style="right:925.6px;top:524.10px;font-size:3.3px;line-height:4.4px;color:#445;">Output</div>
<div class="a" style="left:585px;top:443px;width:74px;height:90.60000000000002px;background:linear-gradient(180deg,#b9c9cd 0%,#b5ced5 60%,#b4d3dc 100%);border-radius:2.5px;box-shadow:0 1px 3px rgba(0,0,0,0.13);"></div>
<div class="t" style="left:588px;top:445.2px;font-size:4.2px;line-height:5px;color:#3a3a3a;font-weight:bold;">≚</div>
<div class="t" style="left:592.6px;top:446.12px;font-size:3.7px;line-height:5px;color:#2a2a2a;font-weight:bold;">Resize Image</div>
<div class="a" style="left:651.5px;top:445.8px;width:4.6px;height:4.6px;background:#f4f6f6;border-radius:1px;"></div>
<svg style="left:0;top:0" width="1" height="1"><defs><linearGradient id="g622" x1="0" y1="0" x2="0" y2="1"><stop offset="0" stop-color="#d8d8d8"/><stop offset="0.35" stop-color="#b4b4b4"/><stop offset="0.6" stop-color="#8a8a8a"/><stop offset="1" stop-color="#707070"/></linearGradient><clipPath id="cg622"><circle cx="622" cy="486.3" r="28.3"/></clipPath></defs><circle cx="622" cy="486.3" r="31.5" fill="#2a2b2d"/><g clip-path="url(#cg622)"><rect x="590.5" y="454.8" width="63.0" height="63.0" fill="url(#g622)"/><path d="M590.50 495.30 L602.00 489.30 L610.00 481.30 L616.00 474.30 L620.00 469.30 L622.00 467.80 L627.00 471.30 L632.00 475.30 L638.00 478.30 L644.00 482.30 L650.00 487.30 L653.50 489.30 L653.50 505.30 L590.50 505.30 Z" fill="#404040"/><path d="M590.50 481.30 L596.00 480.30 L608.00 489.30 L590.50 496.30 Z" fill="#4a4a4a"/><path d="M600.00 499.30 L628.00 476.30 M606.00 502.30 L632.00 480.30 M596.00 494.30 L620.00 476.30" stroke="#b0b0b0" stroke-width="1.1" opacity="0.35"/><path d="M590.50 503.30 L612.00 504.30 L630.00 503.30 L653.50 505.30 L653.50 517.80 L590.50 517.80 Z" fill="#8e8e8e"/><path d="M611.00 517.80 L619.00 506.30 L629.00 517.80 Z" fill="#1c1c1c"/></g><circle cx="622" cy="486.3" r="28.5" fill="none" stroke="#9a9aa8" stroke-width="0.7" opacity="0.7"/><path d="M630.51 479.35 A10.8 10.8 0 1 1 623.50 475.31" fill="none" stroke="#f2f2f2" stroke-width="4.4"/></svg>
<div class="t" style="left:612px;top:518px;width:20px;text-align:center;font-size:3.3px;line-height:4px;color:#333;background:rgba(235,235,235,0.8);border-radius:2px;">512 x 512</div>
<div class="a" style="left:587.1px;top:523.6px;width:1.8px;height:1.8px;border-radius:50%;background:#2f6ef0;"></div>
<div class="t" style="left:590.6px;top:522.30px;font-size:3.3px;line-height:4.4px;color:#445;">Image</div>
<div class="a" style="left:587.1px;top:528.6px;width:1.8px;height:1.8px;border-radius:50%;background:#f5f5f5;"></div>
<div class="t" style="left:590.6px;top:527.30px;font-size:3.3px;line-height:4.4px;color:#445;">Size</div>
<div class="a" style="left:655.1px;top:523.6px;width:1.8px;height:1.8px;border-radius:50%;background:#2f6ef0;"></div>
<div class="t" style="right:847.6px;top:522.30px;font-size:3.3px;line-height:4.4px;color:#445;">Resized Image</div>
<div class="a" style="left:655.1px;top:528.6px;width:1.8px;height:1.8px;border-radius:50%;background:#f5f5f5;"></div>
<div class="t" style="right:847.6px;top:527.30px;font-size:3.3px;line-height:4.4px;color:#445;">Size</div>
<div class="a" style="left:665px;top:443px;width:75px;height:92px;background:linear-gradient(180deg,#b9c9cd 0%,#b5ced5 60%,#b4d3dc 100%);border-radius:2.5px;box-shadow:0 1px 3px rgba(0,0,0,0.13);"></div>
<div class="t" style="left:668px;top:445.2px;font-size:4.2px;line-height:5px;color:#3a3a3a;font-weight:bold;">≚</div>
<div class="t" style="left:672.6px;top:446.12px;font-size:3.7px;line-height:5px;color:#2a2a2a;font-weight:bold;">Threshold</div>
<div class="a" style="left:732.5px;top:445.8px;width:4.6px;height:4.6px;background:#f4f6f6;border-radius:1px;"></div>
<svg style="left:0;top:0" width="1" height="1"><defs><linearGradient id="g702" x1="0" y1="0" x2="0" y2="1"><stop offset="0" stop-color="#ffffff"/><stop offset="1" stop-color="#ffffff"/></linearGradient><clipPath id="cg702"><circle cx="702.4" cy="486.9" r="28.8"/></clipPath></defs><circle cx="702.4" cy="486.9" r="32" fill="#080808"/><g clip-path="url(#cg702)"><rect x="670.4" y="454.9" width="64" height="64" fill="url(#g702)"/><path d="M670.40 495.90 L682.40 489.90 L690.40 481.90 L696.40 474.90 L700.40 469.90 L702.40 468.40 L707.40 471.90 L712.40 475.90 L718.40 478.90 L724.40 482.90 L730.40 487.90 L734.40 489.90 L734.40 505.90 L670.40 505.90 Z" fill="#080808"/><path d="M670.40 481.90 L676.40 480.90 L688.40 489.90 L670.40 496.90 Z" fill="#080808"/><path d="M680.40 499.90 L708.40 476.90 M686.40 502.90 L712.40 480.90 M676.40 494.90 L700.40 476.90" stroke="#ffffff" stroke-width="1.1" opacity="0.55"/><path d="M670.40 503.90 L692.40 504.90 L710.40 503.90 L734.40 505.90 L734.40 518.90 L670.40 518.90 Z" fill="#ffffff"/><path d="M691.40 518.90 L699.40 506.90 L709.40 518.90 Z" fill="#080808"/></g><circle cx="702.4" cy="486.9" r="28.7" fill="none" stroke="#fff" stroke-width="0.8"/><path d="M710.91 479.95 A10.8 10.8 0 1 1 703.90 475.91" fill="none" stroke="#ffffff" stroke-width="4.4"/></svg>
<div class="t" style="left:692.4px;top:519.5px;width:20px;text-align:center;font-size:3.3px;line-height:4px;color:#333;background:rgba(235,235,235,0.8);border-radius:2px;">512 x 512</div>
<div class="a" style="left:667.1px;top:527.1px;width:1.8px;height:1.8px;border-radius:50%;background:#2f6ef0;"></div>
<div class="t" style="left:670.6px;top:525.80px;font-size:3.3px;line-height:4.4px;color:#445;">Input</div>
<div class="a" style="left:736.1px;top:527.1px;width:1.8px;height:1.8px;border-radius:50%;background:#2f6ef0;"></div>
<div class="t" style="right:766.6px;top:525.80px;font-size:3.3px;line-height:4.4px;color:#445;">Output</div>
<div class="a" style="left:666.4px;top:544.3px;width:74.20000000000005px;height:91.10000000000002px;background:linear-gradient(180deg,#b9c9cd 0%,#b5ced5 60%,#b4d3dc 100%);border-radius:2.5px;box-shadow:0 1px 3px rgba(0,0,0,0.13);"></div>
<div class="t" style="left:669.4px;top:546.5px;font-size:4.2px;line-height:5px;color:#3a3a3a;font-weight:bold;">≚</div>
<div class="t" style="left:674.0px;top:547.42px;font-size:3.7px;line-height:5px;color:#2a2a2a;font-weight:bold;">Color</div>
<div class="a" style="left:733.1px;top:547.0999999999999px;width:4.6px;height:4.6px;background:#f4f6f6;border-radius:1px;"></div>
<div class="a" style="left:668px;top:552.4px;width:70.6px;height:70.6px;background:#fff;border-radius:1px;"></div>
<div class="t" style="left:693.3px;top:618.5px;width:20px;text-align:center;font-size:3.3px;line-height:4px;color:#333;background:transparent;border-radius:2px;">512 x 512</div>
<div class="a" style="left:668.1px;top:625.1px;width:1.8px;height:1.8px;border-radius:50%;background:#f5f5f5;"></div>
<div class="t" style="left:671.6px;top:623.80px;font-size:3.3px;line-height:4.4px;color:#445;">Size</div>
<div class="a" style="left:737.1px;top:625.1px;width:1.8px;height:1.8px;border-radius:50%;background:#2f6ef0;"></div>
<div class="t" style="right:765.6px;top:623.80px;font-size:3.3px;line-height:4.4px;color:#445;">Image</div>
<div class="a" style="left:737.1px;top:630.1px;width:1.8px;height:1.8px;border-radius:50%;background:#f5f5f5;"></div>
<div class="t" style="right:765.6px;top:628.80px;font-size:3.3px;line-height:4.4px;color:#445;">Size</div>
<div class="a" style="left:745.3px;top:444.4px;width:74.5px;height:90.80000000000007px;background:linear-gradient(180deg,#b9c9cd 0%,#b5ced5 60%,#b4d3dc 100%);border-radius:2.5px;box-shadow:0 1px 3px rgba(0,0,0,0.13);"></div>
<div class="t" style="left:748.3px;top:446.59999999999997px;font-size:4.2px;line-height:5px;color:#3a3a3a;font-weight:bold;">≚</div>
<div class="t" style="left:752.9px;top:447.52px;font-size:3.7px;line-height:5px;color:#2a2a2a;font-weight:bold;">Composite</div>
<div class="a" style="left:812.3px;top:447.2px;width:4.6px;height:4.6px;background:#f4f6f6;border-radius:1px;"></div>
<div class="a" style="left:748px;top:454.1px;width:68.7px;height:67.8px;background:#fff;"></div>
<svg style="left:0;top:0" width="1" height="1"><defs><linearGradient id="g783" x1="0" y1="0" x2="0" y2="1"><stop offset="0" stop-color="#ffffff"/><stop offset="1" stop-color="#ffffff"/></linearGradient><clipPath id="cg783"><circle cx="783.3" cy="491.3" r="20.97"/></clipPath></defs><circle cx="783.3" cy="491.3" r="23.3" fill="#080808"/><g clip-path="url(#cg783)"><rect x="760.0" y="468.0" width="46.6" height="46.6" fill="url(#g783)"/><path d="M760.00 497.85 L768.74 493.48 L774.56 487.66 L778.93 482.56 L781.84 478.92 L783.30 477.83 L786.94 480.38 L790.58 483.29 L794.95 485.48 L799.32 488.39 L803.69 492.03 L806.60 493.48 L806.60 505.13 L760.00 505.13 Z" fill="#080808"/><path d="M760.00 487.66 L764.37 486.93 L773.11 493.48 L760.00 498.58 Z" fill="#080808"/><path d="M767.28 500.77 L787.67 484.02 M771.65 502.95 L790.58 486.93 M764.37 497.12 L781.84 484.02" stroke="#ffffff" stroke-width="0.8009375000000001" opacity="0.55"/><path d="M760.00 503.68 L776.02 504.41 L789.12 503.68 L806.60 505.13 L806.60 514.60 L760.00 514.60 Z" fill="#ffffff"/><path d="M775.29 514.60 L781.12 505.86 L788.40 514.60 Z" fill="#080808"/></g><circle cx="783.3" cy="491.3" r="20.8971875" fill="none" stroke="#fff" stroke-width="0.5825"/><path d="M789.50 486.24 A7.8637500000000005 7.8637500000000005 0 1 1 784.39 483.29" fill="none" stroke="#ffffff" stroke-width="3.2037500000000003"/></svg>
<div class="t" style="left:762px;top:513px;width:42px;text-align:center;font-size:3.2px;line-height:4.2px;color:#222;background:rgba(225,225,225,0.9);border-radius:2px;">Foreground: 512 x 512<br>Background: 512 x 512</div>
<div class="a" style="left:747.6px;top:525.6px;width:1.8px;height:1.8px;border-radius:50%;background:#2f6ef0;"></div>
<div class="t" style="left:751.1px;top:524.30px;font-size:3.3px;line-height:4.4px;color:#445;">Foreground</div>
<div class="a" style="left:747.6px;top:530.6px;width:1.8px;height:1.8px;border-radius:50%;background:#2f6ef0;"></div>
<div class="t" style="left:751.1px;top:529.30px;font-size:3.3px;line-height:4.4px;color:#445;">Background</div>
<div class="a" style="left:816.1px;top:531.1px;width:1.8px;height:1.8px;border-radius:50%;background:#2f6ef0;"></div>
<div class="t" style="right:686.6px;top:529.80px;font-size:3.3px;line-height:4.4px;color:#445;">Output</div>
<div class="a" style="left:822.4px;top:443.3px;width:74.30000000000007px;height:90.49999999999994px;background:linear-gradient(180deg,#b9c9cd 0%,#b5ced5 60%,#b4d3dc 100%);border-radius:2.5px;box-shadow:0 1px 3px rgba(0,0,0,0.13);"></div>
<div class="t" style="left:825.4px;top:445.5px;font-size:4.2px;line-height:5px;color:#3a3a3a;font-weight:bold;">≚</div>
<div class="t" style="left:830.0px;top:446.42px;font-size:3.7px;line-height:5px;color:#2a2a2a;font-weight:bold;">Invert</div>
<div class="a" style="left:889.2px;top:446.1px;width:4.6px;height:4.6px;background:#f4f6f6;border-radius:1px;"></div>
<div class="a" style="left:824.2px;top:451.9px;width:70px;height:69.7px;background:#000;border-radius:1px;"></div>
<svg style="left:0;top:0" width="1" height="1"><defs><linearGradient id="g860" x1="0" y1="0" x2="0" y2="1"><stop offset="0" stop-color="#0a0a0a"/><stop offset="1" stop-color="#0a0a0a"/></linearGradient><clipPath id="cg860"><circle cx="860" cy="491.9" r="22.32"/></clipPath></defs><circle cx="860" cy="491.9" r="24.8" fill="#f2f2f2"/><g clip-path="url(#cg860)"><rect x="835.2" y="467.09999999999997" width="49.6" height="49.6" fill="url(#g860)"/><path d="M835.20 498.88 L844.50 494.22 L850.70 488.02 L855.35 482.60 L858.45 478.72 L860.00 477.56 L863.88 480.27 L867.75 483.38 L872.40 485.70 L877.05 488.80 L881.70 492.67 L884.80 494.22 L884.80 506.62 L835.20 506.62 Z" fill="#f2f2f2"/><path d="M835.20 488.02 L839.85 487.25 L849.15 494.22 L835.20 499.65 Z" fill="#f2f2f2"/><path d="M842.95 501.97 L864.65 484.15 M847.60 504.30 L867.75 487.25 M839.85 498.10 L858.45 484.15" stroke="#0a0a0a" stroke-width="0.8525000000000001" opacity="0.55"/><path d="M835.20 505.07 L852.25 505.85 L866.20 505.07 L884.80 506.62 L884.80 516.70 L835.20 516.70 Z" fill="#0a0a0a"/><path d="M851.48 516.70 L857.67 507.40 L865.42 516.70 Z" fill="#f2f2f2"/></g><circle cx="860" cy="491.9" r="22.2425" fill="none" stroke="#0a0a0a" stroke-width="0.6200000000000001"/><path d="M866.60 486.51 A8.370000000000001 8.370000000000001 0 1 1 861.16 483.38" fill="none" stroke="#0a0a0a" stroke-width="3.4100000000000006"/></svg>
<div class="t" style="left:849.5px;top:518.8px;width:20px;text-align:center;font-size:3.3px;line-height:4px;color:#333;background:rgba(235,235,235,0.95);border-radius:2px;">512 x 512</div>
<div class="a" style="left:824.6px;top:526.6px;width:1.8px;height:1.8px;border-radius:50%;background:#2f6ef0;"></div>
<div class="t" style="left:828.1px;top:525.30px;font-size:3.3px;line-height:4.4px;color:#445;">Input</div>
<div class="a" style="left:892.6px;top:526.6px;width:1.8px;height:1.8px;border-radius:50%;background:#2f6ef0;"></div>
<div class="t" style="right:610.1px;top:525.30px;font-size:3.3px;line-height:4.4px;color:#445;">Output</div>
<div class="a" style="left:754px;top:261px;width:95px;height:52.80000000000001px;background:linear-gradient(180deg,#c6cbc7 0%,#cccbca 64%,#c6d9cc 80%,#c0dccb 100%);border-radius:2.5px;box-shadow:0 1px 3px rgba(0,0,0,0.13);"></div>
<div class="t" style="left:757px;top:263.2px;font-size:4.2px;line-height:5px;color:#3a3a3a;font-weight:bold;">≚</div>
<div class="t" style="left:761.6px;top:264.12px;font-size:3.7px;line-height:5px;color:#2a2a2a;font-weight:bold;">Plain Text</div>
<div class="a" style="left:841.5px;top:263.8px;width:4.6px;height:4.6px;background:#f4f6f6;border-radius:1px;"></div>
<div class="t" style="left:757px;top:271.2px;font-size:4.4px;line-height:5px;color:#2e2e2e;">dynamic sky clouds up view, ultra hd,<br>realistic, vivid colors, highly detailed, UHD<br>drawing, pen and ink, perfect composition,<br>beautiful detailed intricate insanely detailed<br>octane render, trending on artstation, 8k</div>
<div class="a" style="left:845.1px;top:305.6px;width:1.8px;height:1.8px;border-radius:50%;background:#2f6ef0;"></div>
<div class="t" style="right:657.6px;top:304.30px;font-size:3.3px;line-height:4.4px;color:#445;">Output</div>
<div class="a" style="left:773.2px;top:319.1px;width:74.69999999999993px;height:38.39999999999998px;background:linear-gradient(180deg,#c6cbc7 0%,#cccbca 64%,#c6d9cc 80%,#c0dccb 100%);border-radius:2.5px;box-shadow:0 1px 3px rgba(0,0,0,0.13);"></div>
<div class="t" style="left:776.2px;top:321.3px;font-size:4.2px;line-height:5px;color:#3a3a3a;font-weight:bold;">≚</div>
<div class="t" style="left:780.8000000000001px;top:322.22px;font-size:3.7px;line-height:5px;color:#2a2a2a;font-weight:bold;">Plain Text</div>
<div class="a" style="left:840.4px;top:321.90000000000003px;width:4.6px;height:4.6px;background:#f4f6f6;border-radius:1px;"></div>
<div class="t" style="left:776.3px;top:329.3px;font-size:4.4px;line-height:5px;color:#2e2e2e;">low quality, ugly, cartoon, 3d</div>
<div class="a" style="left:843.6px;top:350.1px;width:1.8px;height:1.8px;border-radius:50%;background:#2f6ef0;"></div>
<div class="t" style="right:659.1px;top:348.80px;font-size:3.3px;line-height:4.4px;color:#445;">Output</div>
<div class="a" style="left:902px;top:264.5px;width:188.7px;height:270.5px;background:linear-gradient(180deg,#b6c8cd 0%,#b5d0d8 100%);border-radius:2.5px;box-shadow:0 0 0 1.1px #5f8ff2, 0 1px 3px rgba(0,0,0,0.15);"></div>
<div class="t" style="left:905px;top:266.3px;font-size:4.2px;line-height:5px;color:#3a3a3a;font-weight:bold;">≚</div>
<div class="t" style="left:909.6px;top:267.22px;font-size:3.7px;line-height:5px;color:#2a2a2a;font-weight:bold;">Stable Diffusion</div>
<div class="a" style="left:1083px;top:267px;width:4.6px;height:4.6px;background:#f4f6f6;border-radius:1px;"></div>
<svg style="left:0;top:0" width="1" height="1"><defs>
<radialGradient id="sdsky" cx="0.5" cy="0.3" r="0.7"><stop offset="0" stop-color="#3c5872"/><stop offset="0.25" stop-color="#22324a"/><stop offset="0.55" stop-color="#131a26"/><stop offset="1" stop-color="#06080c"/></radialGradient>
<linearGradient id="sdin" x1="0" y1="0" x2="0" y2="1"><stop offset="0" stop-color="#050914"/><stop offset="0.28" stop-color="#0a1226"/><stop offset="0.4" stop-color="#3a88c8"/><stop offset="0.5" stop-color="#c8e4f2"/><stop offset="0.62" stop-color="#eaf2f6"/><stop offset="0.75" stop-color="#98a6b8"/><stop offset="0.88" stop-color="#d8dee6"/><stop offset="1" stop-color="#8e9aac"/></linearGradient>
<radialGradient id="sdcore" cx="0.45" cy="0.4" r="0.6"><stop offset="0" stop-color="#f6f9fb"/><stop offset="0.6" stop-color="#dbe6ee"/><stop offset="1" stop-color="#8fb0cc"/></radialGradient>
<linearGradient id="sdring" x1="0.2" y1="0" x2="0.8" y2="1"><stop offset="0" stop-color="#e0f8fa"/><stop offset="0.3" stop-color="#9edde3"/><stop offset="0.7" stop-color="#a2e0e6"/><stop offset="1" stop-color="#e8f8fa"/></linearGradient>
<clipPath id="sdclip"><rect x="904" y="273.2" width="184" height="183.6"/></clipPath>
<clipPath id="sdinclip"><circle cx="998.8" cy="381.8" r="56.5"/></clipPath>
<filter id="bA" x="-50%" y="-50%" width="200%" height="200%"><feGaussianBlur stdDeviation="0.8"/></filter>
<filter id="bB" x="-50%" y="-50%" width="200%" height="200%"><feGaussianBlur stdDeviation="1.6"/></filter>
<filter id="bC" x="-50%" y="-50%" width="200%" height="200%"><feGaussianBlur stdDeviation="3.5"/></filter>
<filter id="bD" x="-50%" y="-50%" width="200%" height="200%"><feGaussianBlur stdDeviation="6"/></filter>
</defs>
<g clip-path="url(#sdclip)">
<rect x="904" y="273.2" width="184" height="183.6" fill="url(#sdsky)"/>
<ellipse cx="998" cy="320" rx="26" ry="9" fill="#c0dcec" opacity="0.5" filter="url(#bC)"/>
<g filter="url(#bB)"><circle cx="917.2" cy="282.2" r="18" fill="#5c6678" opacity="0.4"/><circle cx="937.2" cy="292.2" r="16" fill="#5c6678" opacity="0.4"/><circle cx="957.2" cy="295.2" r="13" fill="#5c6678" opacity="0.4"/><circle cx="972.2" cy="300.2" r="11" fill="#5c6678" opacity="0.4"/><circle cx="986.2" cy="306.2" r="8" fill="#5c6678" opacity="0.4"/><circle cx="952.2" cy="281.2" r="13" fill="#5c6678" opacity="0.4"/><circle cx="974.2" cy="285.2" r="9" fill="#5c6678" opacity="0.4"/><circle cx="927.2" cy="307.2" r="16" fill="#5c6678" opacity="0.4"/><circle cx="910.2" cy="324.2" r="14" fill="#5c6678" opacity="0.4"/><circle cx="942.2" cy="307.2" r="12" fill="#5c6678" opacity="0.4"/><circle cx="1009.8" cy="278.2" r="8" fill="#5a524c" opacity="0.4"/><circle cx="1023.8" cy="285.2" r="10" fill="#5a524c" opacity="0.4"/><circle cx="1042.8" cy="292.2" r="12" fill="#5a524c" opacity="0.4"/><circle cx="1057.8" cy="305.2" r="14" fill="#5a524c" opacity="0.4"/><circle cx="1072.8" cy="325.2" r="16" fill="#5a524c" opacity="0.4"/><circle cx="1083.8" cy="347.2" r="14" fill="#5a524c" opacity="0.4"/><circle cx="1065.8" cy="281.2" r="16" fill="#5a524c" opacity="0.4"/><circle cx="1085.8" cy="300.2" r="18" fill="#5a524c" opacity="0.4"/><circle cx="914" cy="356" r="14" fill="#3a404e" opacity="0.4"/><circle cx="927" cy="375" r="13" fill="#3a404e" opacity="0.4"/><circle cx="931" cy="395" r="11" fill="#3a404e" opacity="0.4"/><circle cx="920" cy="411" r="14" fill="#3a404e" opacity="0.4"/><circle cx="908" cy="386" r="12" fill="#3a404e" opacity="0.4"/></g>
<g filter="url(#bA)"><circle cx="915" cy="280" r="18" fill="#10131d" /><circle cx="935" cy="290" r="16" fill="#10131d" /><circle cx="955" cy="293" r="13" fill="#10131d" /><circle cx="970" cy="298" r="11" fill="#10131d" /><circle cx="984" cy="304" r="8" fill="#10131d" /><circle cx="950" cy="279" r="13" fill="#10131d" /><circle cx="972" cy="283" r="9" fill="#10131d" /><circle cx="925" cy="305" r="16" fill="#10131d" /><circle cx="908" cy="322" r="14" fill="#10131d" /><circle cx="940" cy="305" r="12" fill="#10131d" /><circle cx="1012" cy="276" r="8" fill="#12151b" /><circle cx="1026" cy="283" r="10" fill="#12151b" /><circle cx="1045" cy="290" r="12" fill="#12151b" /><circle cx="1060" cy="303" r="14" fill="#12151b" /><circle cx="1075" cy="323" r="16" fill="#12151b" /><circle cx="1086" cy="345" r="14" fill="#12151b" /><circle cx="1068" cy="279" r="16" fill="#12151b" /><circle cx="1088" cy="298" r="18" fill="#12151b" /><circle cx="912" cy="355" r="14" fill="#0c0f17" /><circle cx="925" cy="374" r="13" fill="#0c0f17" /><circle cx="929" cy="394" r="11" fill="#0c0f17" /><circle cx="918" cy="410" r="14" fill="#0c0f17" /><circle cx="906" cy="385" r="12" fill="#0c0f17" /></g>
<g filter="url(#bC)">
<ellipse cx="925" cy="447" rx="30" ry="15" fill="#44444a"/>
<ellipse cx="912" cy="452" rx="18" ry="9" fill="#5c524a"/>
<ellipse cx="1000" cy="456" rx="70" ry="13" fill="#07080c"/>
<ellipse cx="1080" cy="400" rx="12" ry="45" fill="#283040"/>
<ellipse cx="1076" cy="450" rx="16" ry="9" fill="#4a4442"/>
</g>
<circle cx="994" cy="290" r="1.1" fill="#cfe6f5"/>
</g>
<circle cx="998.8" cy="381.8" r="60.7" fill="none" stroke="url(#sdring)" stroke-width="8.6"/>
<path d="M968.45 329.2 A60.7 60.7 0 0 1 1029.2 329.2" fill="none" stroke="#f4fcfd" stroke-width="3" opacity="0.7" filter="url(#bA)"/>
<g clip-path="url(#sdinclip)">
<rect x="940" y="324" width="120" height="116" fill="url(#sdin)"/>
<g filter="url(#bA)"><circle cx="950" cy="345" r="18" fill="#070d1c" /><circle cx="972" cy="336" r="16" fill="#070d1c" /><circle cx="1000" cy="326" r="12" fill="#070d1c" /><circle cx="1026" cy="336" r="16" fill="#070d1c" /><circle cx="1050" cy="348" r="18" fill="#070d1c" /><circle cx="954" cy="368" r="10" fill="#070d1c" /><circle cx="1045" cy="366" r="10" fill="#070d1c" /><circle cx="966" cy="354" r="11" fill="#070d1c" /><circle cx="1034" cy="352" r="11" fill="#070d1c" /><circle cx="945" cy="372" r="8" fill="#070d1c" /><circle cx="1054" cy="370" r="8" fill="#070d1c" /></g>
<ellipse cx="999" cy="350" rx="14" ry="12" fill="#d8f4ff" opacity="0.95" filter="url(#bC)"/>
<ellipse cx="958" cy="373" rx="12" ry="5" fill="#3a8ad0" opacity="0.6" filter="url(#bB)"/>
<ellipse cx="1040" cy="374" rx="12" ry="5" fill="#3a8ad0" opacity="0.6" filter="url(#bB)"/>
<g filter="url(#bA)">
<circle cx="952" cy="386" r="7" fill="#e8f0f6" /><circle cx="960" cy="380" r="5" fill="#e8f0f6" />
<circle cx="1045" cy="392" r="9" fill="#eef2f4" /><circle cx="1050" cy="405" r="7" fill="#eef2f4" />
</g>
<g filter="url(#bC)"><circle cx="965" cy="414" r="7" fill="#7c8aa0" opacity="0.45"/><circle cx="990" cy="412" r="5" fill="#7c8aa0" opacity="0.45"/><circle cx="1012" cy="410" r="6" fill="#7c8aa0" opacity="0.45"/><circle cx="1036" cy="416" r="7" fill="#7c8aa0" opacity="0.45"/></g>
<g filter="url(#bA)"><circle cx="986" cy="428" r="8" fill="#eceef2" /><circle cx="1000" cy="424" r="8" fill="#eceef2" /><circle cx="1014" cy="430" r="8" fill="#eceef2" /></g>
</g>
<g filter="url(#bA)">
<circle cx="998.7" cy="380" r="17.5" fill="url(#sdcore)"/>
<circle cx="998.7" cy="379.6" r="22" fill="none" stroke="#14225c" stroke-width="11.5"/>
<path d="M983 366 A21 21 0 0 1 1013 364" fill="none" stroke="#3152b0" stroke-width="2.4" opacity="0.85"/>
<path d="M1019 380 A21 21 0 0 1 1006 399" fill="none" stroke="#2a48a8" stroke-width="2" opacity="0.7"/>
</g>
<rect x="904" y="273.2" width="184" height="183.6" fill="none" stroke="#111" stroke-width="0.6"/>
</svg>
<div class="t" style="left:988px;top:451.5px;width:21px;text-align:center;font-size:3.2px;line-height:4.3px;color:#222;background:rgba(230,230,230,0.95);border-radius:2px;">512 x 512</div>
<div class="a" style="left:903.6px;top:459.90000000000003px;width:1.8px;height:1.8px;border-radius:50%;background:#2f6ef0;"></div>
<div class="t" style="left:907.1px;top:458.60px;font-size:3.3px;line-height:4.4px;color:#333;">Prompt (Text)</div>
<div class="a" style="left:903.6px;top:465.32000000000005px;width:1.8px;height:1.8px;border-radius:50%;background:#2f6ef0;"></div>
<div class="t" style="left:907.1px;top:464.02px;font-size:3.3px;line-height:4.4px;color:#333;">Negative Prompt (Text)</div>
<div class="a" style="left:903.6px;top:470.74px;width:1.8px;height:1.8px;border-radius:50%;background:#dfe8ec;"></div>
<div class="t" style="left:907.1px;top:469.44px;font-size:3.3px;line-height:4.4px;color:#333;">Starting Image</div>
<div class="a" style="left:903.6px;top:476.16px;width:1.8px;height:1.8px;border-radius:50%;background:#dfe8ec;"></div>
<div class="t" style="left:907.1px;top:474.86px;font-size:3.3px;line-height:4.4px;color:#9aa;">Canny</div>
<div class="a" style="left:903.6px;top:481.58000000000004px;width:1.8px;height:1.8px;border-radius:50%;background:#dfe8ec;"></div>
<div class="t" style="left:907.1px;top:480.28px;font-size:3.3px;line-height:4.4px;color:#9aa;">Holistic_Edges</div>
<div class="a" style="left:903.6px;top:487.00000000000006px;width:1.8px;height:1.8px;border-radius:50%;background:#dfe8ec;"></div>
<div class="t" style="left:907.1px;top:485.70px;font-size:3.3px;line-height:4.4px;color:#9aa;">MLSD</div>
<div class="a" style="left:903.6px;top:492.42px;width:1.8px;height:1.8px;border-radius:50%;background:#dfe8ec;"></div>
<div class="t" style="left:907.1px;top:491.12px;font-size:3.3px;line-height:4.4px;color:#9aa;">Scribble</div>
<div class="a" style="left:903.6px;top:497.84000000000003px;width:1.8px;height:1.8px;border-radius:50%;background:#dfe8ec;"></div>
<div class="t" style="left:907.1px;top:496.54px;font-size:3.3px;line-height:4.4px;color:#9aa;">Line_Art</div>
<div class="a" style="left:903.6px;top:503.26000000000005px;width:1.8px;height:1.8px;border-radius:50%;background:#dfe8ec;"></div>
<div class="t" style="left:907.1px;top:501.96px;font-size:3.3px;line-height:4.4px;color:#9aa;">Line_Art_Anime</div>
<div class="a" style="left:903.6px;top:508.68000000000006px;width:1.8px;height:1.8px;border-radius:50%;background:#dfe8ec;"></div>
<div class="t" style="left:907.1px;top:507.38px;font-size:3.3px;line-height:4.4px;color:#9aa;">Depth</div>
<div class="a" style="left:903.6px;top:514.1px;width:1.8px;height:1.8px;border-radius:50%;background:#dfe8ec;"></div>
<div class="t" style="left:907.1px;top:512.80px;font-size:3.3px;line-height:4.4px;color:#9aa;">Inpainting</div>
<div class="a" style="left:903.6px;top:519.52px;width:1.8px;height:1.8px;border-radius:50%;background:#dfe8ec;"></div>
<div class="t" style="left:907.1px;top:518.22px;font-size:3.3px;line-height:4.4px;color:#9aa;">Mask</div>
<div class="a" style="left:903.6px;top:524.94px;width:1.8px;height:1.8px;border-radius:50%;background:#dfe8ec;"></div>
<div class="t" style="left:907.1px;top:523.64px;font-size:3.3px;line-height:4.4px;color:#9aa;">Tile</div>
<div class="a" style="left:903.6px;top:530.36px;width:1.8px;height:1.8px;border-radius:50%;background:#2f6ef0;"></div>
<div class="t" style="left:907.1px;top:529.06px;font-size:3.3px;line-height:4.4px;color:#333;">QR Code</div>
<div class="a" style="left:1087.1px;top:530.1px;width:1.8px;height:1.8px;border-radius:50%;background:#f5f5f5;"></div>
<div class="t" style="right:415.5999999999999px;top:528.80px;font-size:3.3px;line-height:4.4px;color:#445;">Output</div>
</div></div>
</body></html>
